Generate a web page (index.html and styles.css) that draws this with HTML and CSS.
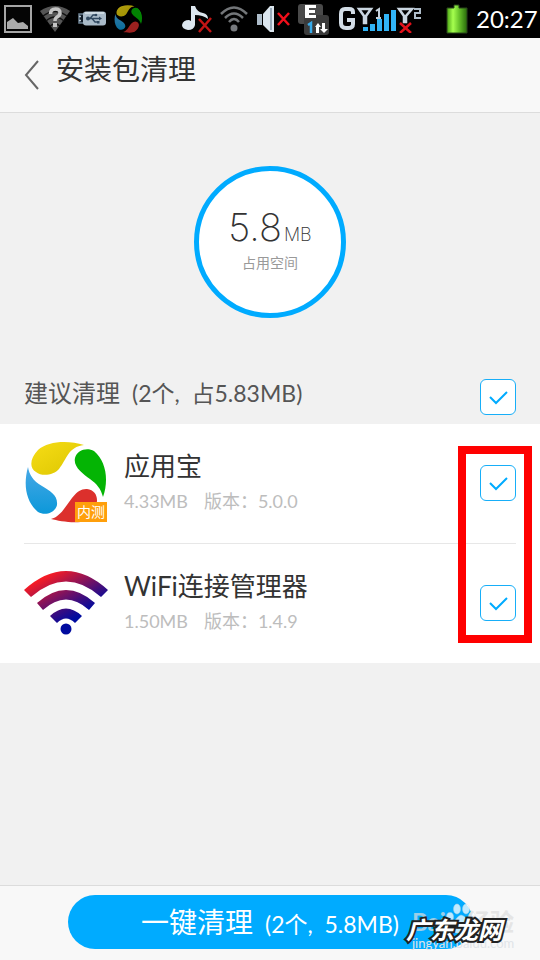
FILE: index.html
```html
<!DOCTYPE html>
<html lang="zh-CN">
<head>
<meta charset="utf-8">
<meta name="viewport" content="width=device-width, initial-scale=1">
<title>安装包清理</title>
<link rel="stylesheet" href="styles.css">
</head>
<body>
<div class="status">
  <svg width="28" height="28" viewBox="0 0 28 28"><rect x="1" y="1" width="26" height="26" fill="#050505" stroke="#a5a5a5" stroke-width="2"/><path d="M3 24V17L9 13L14 18L19 17L24 21V24Z" fill="#aaa"/></svg>
  <svg width="30" height="28" viewBox="0 0 30 28"><path d="M0 6Q15-4 30 6L15 27Z" fill="#555"/><path d="M3 11Q15 2 27 11M6 16Q15 8 24 16M10 21Q15 17 20 21" fill="none" stroke="#111" stroke-width="1.5"/><path d="M10.500 9Q10.500 4 15.500 4Q20 4 20 8Q20 10.500 17 12Q15 13 15 16" fill="none" stroke="#c4c4c4" stroke-width="3.500"/><rect x="13" y="18" width="4" height="4" fill="#c4c4c4"/></svg>
  <svg width="28" height="28" viewBox="0 0 28 28"><path d="M1 9H6V18H1Z" fill="#111c28" stroke="#6c8193" stroke-width="1.500"/><path d="M1 11.500H3M1 15.500H3" stroke="#bbc9d5" stroke-width="1.500"/><rect x="5" y="6.500" width="23" height="14" rx="3" fill="#a9bac8"/><path d="M7 8H26" stroke="#dbe4eb" stroke-width="1.500"/><path d="M9 13.500H22M12 13.500L15 10H18M14 13.500L17 17H20" fill="none" stroke="#30485f" stroke-width="1.300"/><circle cx="10" cy="13.500" r="2" fill="#30485f"/><path d="M21 11.500L24 13.500L21 15.500Z" fill="#30485f"/><circle cx="18" cy="10" r="1.300" fill="#30485f"/><rect x="19" y="16" width="2.500" height="2.500" fill="#30485f"/></svg>
  <svg width="28" height="28" viewBox="0 0 82 82"><use href="#petals"/><path d="M27 79C43 75 47 47 63 48C77 50 76 67 62 77C51 84 35 80 27 79Z" fill="#d92f2c"/><circle cx="41" cy="41" r="41" fill="#000" opacity=".28"/></svg>
  <svg class="status-mid" width="30" height="30" viewBox="0 0 30 30"><path d="M9 2H13Q15 8 21 9Q26 10 26 15Q21 11 13 11V21Q12 26 6 26Q0 25 0 21Q1 16 7 16L9 17Z" fill="#dce6ee"/><path d="M17 15L29 28M29 14L17 28" stroke="#c31414" stroke-width="2.500"/></svg>
  <svg width="28" height="28" viewBox="0 0 28 28"><g fill="none" stroke="#737679" stroke-width="2.500"><path d="M1 9Q14-4 27 9"/><path d="M5 13Q14 4 23 13"/><path d="M9 17Q14 11 19 17"/></g><circle cx="14" cy="23" r="3.500" fill="#777a7e"/></svg>
  <svg width="34" height="28" viewBox="0 0 34 28"><path d="M1 9H6V20H1Z" fill="#aebdca"/><path d="M7 9L14 1H18V27H14L7 20Z" fill="#dce6ee"/><path d="M15 3V25" stroke="#8296a7" stroke-width="1.500"/><path d="M22 8L33 20M33 8L22 20" stroke="#f10f1b" stroke-width="2.500"/></svg>
  <svg width="32" height="34" viewBox="0 0 32 34"><rect x="0" y="2" width="25" height="20" rx="3" fill="#4a4a4a"/><rect x="6" y="13" width="25" height="20" rx="3" fill="#3b3b3b"/><path d="M7 3H18V6H11V8H17V11H11V13H18V16H7Z" fill="#fff"/><path d="M10 23L13 21V31" fill="none" stroke="#38abea" stroke-width="2.500"/><path d="M17 25L20 21L23 25H21V31H18V25ZM24 21H27V27H30L26 31L22 27H24Z" fill="#fff"/></svg>
  <svg width="84" height="28" viewBox="0 0 84 28"><path d="M15 9V7Q15 4 11 4H7Q3 4 3 9V18Q3 23 8 23H10Q15 23 15 19V15H9" fill="none" stroke="#d3dde6" stroke-width="4"/><path d="M21 4H33L28 11V18H26V11Z" fill="none" stroke="#cad6e1" stroke-width="2.500"/><path d="M38 6L41 4V13M38 13H43" fill="none" stroke="#c5d1dc" stroke-width="2"/><path d="M25 26V22H30V26ZM32 26V19H37V26ZM39 26V14H44V26ZM46 26V9H51V26ZM53 26V5H58V26Z" fill="#31b4f6"/><path d="M61 4H74L68 11V17H66V11Z" fill="none" stroke="#cad6e1" stroke-width="2.500"/><path d="M76 4H82V8H77V13H83" fill="none" stroke="#afbdca" stroke-width="2"/><path d="M62 18L73 28M73 18L62 28" stroke="#e1111a" stroke-width="2.500"/></svg>
  <svg class="battery" width="22" height="30" viewBox="0 0 22 30"><defs><linearGradient id="cell"><stop stop-color="#4ba514"/><stop offset=".3" stop-color="#a6ff4f"/><stop offset=".6" stop-color="#69c42b"/><stop offset="1" stop-color="#286b0b"/></linearGradient></defs><path d="M8 1H13V4H21V29H1V4H8Z" fill="url(#cell)" stroke="#29451a"/></svg>
  <time>20:27</time>
</div>

<header class="top">
  <button class="back" aria-label="返回"><svg width="16" height="30" viewBox="0 0 16 30"><path d="M14 1L2 15L14 29" fill="none" stroke="#666" stroke-width="2"/></svg></button>
  <h1>安装包清理</h1>
</header>

<main>
  <section class="summary">
    <div class="ring">
      <div class="size"><span class="num">5.8</span><span class="unit">MB</span></div>
      <div class="caption">占用空间</div>
    </div>
  </section>

  <div class="group">
    <label for="all"><span>建议清理</span><span>(2个, &nbsp;占5.83MB)</span></label>
    <span class="check"><input type="checkbox" id="all" checked><svg viewBox="0 0 36 36"><path d="M10 18L16 24L27 13"/></svg></span>
  </div>

  <ul class="list">
    <li>
      <svg class="app" viewBox="0 0 84 84"><defs>
        <linearGradient id="y" x2="1" y2="1"><stop stop-color="#f7dd16"/><stop offset="1" stop-color="#dbc500"/></linearGradient>
        <linearGradient id="b" x2="0" y2="1"><stop stop-color="#47a8e6"/><stop offset="1" stop-color="#0c98d9"/></linearGradient>
        <g id="petals"><path d="M60 4C44-1 24 0 14 9C6 17 5 27 12 31C18 36 30 34 35 28C43 18 44 6 60 4Z" fill="url(#y)"/><path d="M79 56C85 39 82 20 70 10C63 6 53 9 51 17C49 26 59 33 66 38C73 43 77 48 79 56Z" fill="#04b404"/><path d="M4 26C-1 44 2 61 14 71C21 75 31 72 33 64C34 54 26 50 18 45C9 40 5 33 4 26Z" fill="url(#b)"/></g></defs>
        <use href="#petals"/><path d="M27 78C43 74 47 47 63 48C77 50 76 67 62 80C51 83 35 80 27 78Z" fill="#dc302c"/>
        <rect x="51" y="61" width="32" height="20" fill="#ff9f0b"/><text x="67" y="76" class="beta">内测</text></svg>
      <div class="info"><label for="a1" class="name">应用宝</label><div class="meta"><span>4.33MB</span><span>版本：5.0.0</span></div></div>
      <span class="check"><input type="checkbox" id="a1" checked><svg viewBox="0 0 36 36"><path d="M10 18L16 24L27 13"/></svg></span>
    </li>
    <li>
      <svg class="app" viewBox="0 0 84 84"><defs><linearGradient id="w" gradientUnits="userSpaceOnUse" x1="24" y1="12" x2="49" y2="58"><stop stop-color="#ff1c20"/><stop offset=".75" stop-color="#3a0d80"/><stop offset="1" stop-color="#000b9f"/></linearGradient></defs><path d="M0 29Q42-9 84 29L77 36Q42 5 7 36ZM13 42Q42 16 71 42L65 49Q42 28 19 49ZM26 55Q42 40 58 55L51 62Q42 53 33 62Z" fill="url(#w)"/><circle cx="42" cy="68" r="5.500" fill="#000b9f"/></svg>
      <div class="info"><label for="a2" class="name">WiFi连接管理器</label><div class="meta"><span>1.50MB</span><span>版本：1.4.9</span></div></div>
      <span class="check"><input type="checkbox" id="a2" checked><svg viewBox="0 0 36 36"><path d="M10 18L16 24L27 13"/></svg></span>
    </li>
    <li class="highlight" aria-hidden="true"></li>
  </ul>
</main>

<footer>
  <button class="clean"><span>一键清理</span><span>(2个, &nbsp;5.8MB)</span></button>
  <div class="mark">
    <svg class="paw" width="32" height="32" viewBox="0 0 32 32"><g fill="#fff" stroke="#ddd" stroke-width=".5" opacity=".75"><ellipse cx="4" cy="15" rx="3.500" ry="4.500"/><ellipse cx="11" cy="7" rx="3.500" ry="5"/><ellipse cx="20" cy="7" rx="3.500" ry="5"/><ellipse cx="26" cy="15" rx="3.500" ry="5"/><path d="M15 13Q20 14 24 22Q27 30 20 31H10Q3 29 7 22Q11 14 15 13Z"/></g></svg>
    <span class="baidu"><span>Bai</span><span>经验</span></span>
    <span class="url">jingyan.baidu.com</span>
    <strong>广东龙网</strong>
  </div>
</footer>
</body>
</html>
```
FILE: styles.css
```css
* { box-sizing: border-box; }

body {
  margin: 0;
  min-height: 100vh;
  display: flex;
  flex-direction: column;
  background: #f1f1f1;
  color: #333;
  font-family: Lato, "Noto Sans CJK SC", sans-serif;
}

button { font: inherit; border: 0; padding: 0; cursor: pointer; }

.status {
  height: 38px;
  display: flex;
  align-items: center;
  gap: 8px;
  padding-left: 4px;
  background: #000;
  overflow: hidden;
}
.status svg { flex: none; }
.status .status-mid { margin-left: 32px; }
.status .battery { margin-left: 16px; }
.status time { color: #fff; font-size: 24px; line-height: 36px; }

.top {
  height: 75px;
  display: flex;
  align-items: center;
  gap: 16px;
  padding: 0 24px;
  background: #f8f8f8;
  border-bottom: 1px solid #dcdcdc;
}
.back { display: flex; background: none; }
.top h1 {
  margin: 0 0 12px;
  font-size: 28px;
  line-height: 40px;
  font-weight: 400;
}

main { flex: 1; }

.summary { display: flex; justify-content: center; padding: 53px 0; }
.ring {
  width: 152px;
  height: 152px;
  padding-top: 32px;
  border: 5px solid #00abff;
  border-radius: 50%;
  background: #fff;
  text-align: center;
}
.size {
  display: flex;
  justify-content: center;
  align-items: baseline;
  gap: 2px;
  font-family: Inter, sans-serif;
  font-weight: 200;
  line-height: 48px;
}
.num { font-size: 38px; }
.unit { font-size: 18px; line-height: 24px; }
.caption { color: #999; font-size: 14px; line-height: 24px; }

.group {
  display: flex;
  justify-content: space-between;
  align-items: flex-start;
  height: 53px;
  padding: 8px 24px 0;
}
.group label {
  display: flex;
  align-items: baseline;
  gap: 12px;
  color: #555;
  font-size: 24px;
  line-height: 28px;
}

.check { display: grid; flex: none; width: 36px; height: 36px; }
.check input, .check svg { grid-area: 1 / 1; width: 36px; height: 36px; margin: 0; }
.check input {
  appearance: none;
  border: 1px solid #17aef8;
  border-radius: 6px;
  background: #fff;
}
.check svg { pointer-events: none; fill: none; stroke: #00abff; stroke-width: 2; visibility: hidden; }
.check input:checked + svg { visibility: visible; }

.list {
  position: relative;
  margin: 0;
  padding: 0 24px;
  list-style: none;
  background: #fff;
}
.list li:not(.highlight) {
  display: flex;
  align-items: center;
  gap: 16px;
  height: 119px;
  padding-bottom: 1px;
}
.list li:not(.highlight):first-child { height: 120px; border-bottom: 1px solid #e7e7e7; }
.app { width: 84px; height: 84px; flex: none; }
.beta { font-size: 14px; fill: #fff; text-anchor: middle; }
.info { flex: 1; min-width: 0; }
.name { display: block; font-size: 26px; line-height: 36px; }
.meta {
  display: flex;
  gap: 16px;
  color: #bdbdbd;
  font-size: 18px;
  line-height: 34px;
}
.highlight {
  position: absolute;
  top: 22px;
  right: 8px;
  width: 74px;
  height: 197px;
  border: 8px solid #f00;
  pointer-events: none;
}

footer {
  position: relative;
  display: flex;
  justify-content: center;
  height: 75px;
  padding-top: 9px;
  background: #f8f8f8;
  border-top: 1px solid #dcdcdc;
}
.clean {
  width: 75%;
  height: 54px;
  display: flex;
  justify-content: center;
  align-items: baseline;
  gap: 12px;
  border-radius: 27px;
  background: #00abff;
  color: #fff;
  font-size: 28px;
  line-height: 54px;
}
.clean span + span, .group span + span { font-size: 23px; }

.mark { position: absolute; top: 16px; right: 26px; width: 112px; height: 52px; pointer-events: none; }
.mark > * { position: absolute; white-space: nowrap; }
.paw { left: 44px; top: 0; }
.baidu {
  left: 10px;
  top: 8px;
  display: flex;
  gap: 20px;
  font-size: 24px;
  line-height: 24px;
  font-weight: 700;
  color: #ddd;
  opacity: .7;
}
.url { left: 10px; top: 33px; font-size: 13px; line-height: 16px; color: #e0e4e8; }
.mark strong {
  left: 4px;
  top: 14px;
  font-size: 24px;
  line-height: 28px;
  font-weight: 700;
  font-style: italic;
  color: #fff;
  -webkit-text-stroke: 4px #222;
  paint-order: stroke fill;
}
```
